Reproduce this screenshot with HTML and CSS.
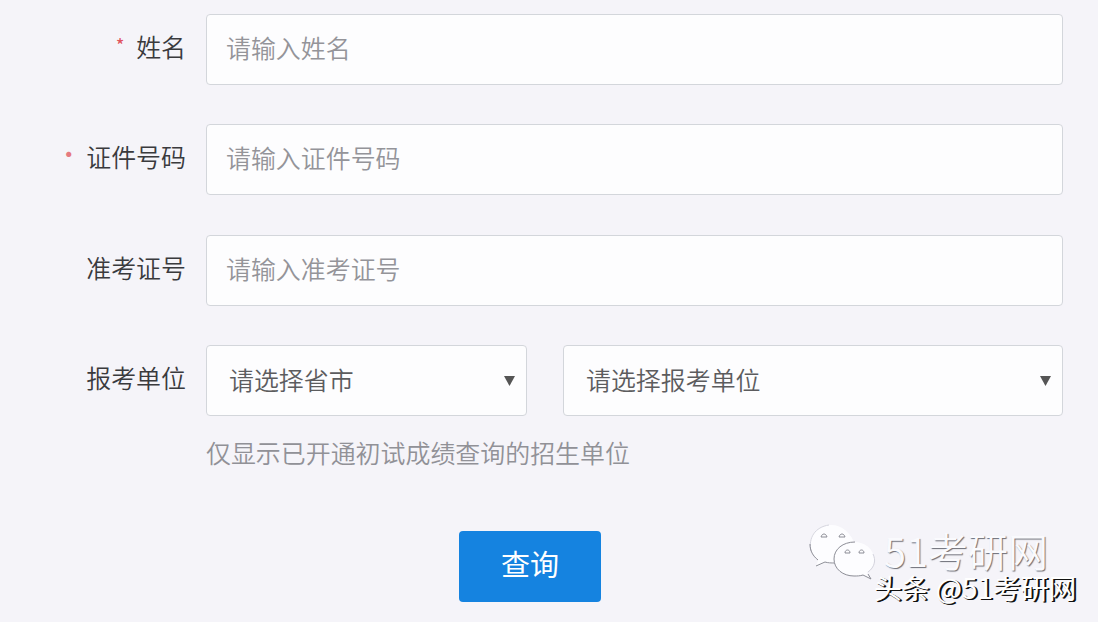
FILE: index.html
```html
<!DOCTYPE html>
<html lang="zh-CN">
<head>
    <meta charset="UTF-8">
    <meta name="viewport" content="width=device-width, initial-scale=1.0">
    <title>成绩查询</title>
    <link rel="stylesheet" href="styles.css">
</head>
<body>
    <form class="query-form">
        <div class="row">
            <label for="name"><span class="required tick">*</span>姓名</label>
            <input type="text" id="name" name="name" placeholder="请输入姓名">
        </div>
        <div class="row">
            <label for="idcard"><span class="required">•</span>证件号码</label>
            <input type="text" id="idcard" name="idcard" placeholder="请输入证件号码">
        </div>
        <div class="row">
            <label for="ticket">准考证号</label>
            <input type="text" id="ticket" name="ticket" placeholder="请输入准考证号">
        </div>
        <div class="row">
            <label for="province">报考单位</label>
            <div class="selects">
                <div class="select province">
                    <select id="province" name="province">
                        <option>请选择省市</option>
                    </select>
                    <svg class="arrow" viewBox="0 0 11 10"><path d="M0 0h11L5.5 10z"/></svg>
                </div>
                <div class="select school">
                    <select id="school" name="school">
                        <option>请选择报考单位</option>
                    </select>
                    <svg class="arrow" viewBox="0 0 11 10"><path d="M0 0h11L5.5 10z"/></svg>
                </div>
            </div>
        </div>
        <p class="hint">仅显示已开通初试成绩查询的招生单位</p>
        <button type="submit">查询</button>
    </form>

    <!-- Watermark -->
    <div class="wechat">
        <svg class="wechat-logo" viewBox="0 0 68 58">
            <path class="bubble" d="M22 3C10 3 1 11 1 22c0 7 3 12 8 16l-2 7 9-4c3 1 6 1 10 1l20-18C43 11 33 3 22 3z"/>
            <path class="shade light" d="M2 29C-1 16 6 5 20 3"/>
            <path class="shade" d="M1 22c0 7 3 12 8 16M7 44l9-4c3 1 6 1 10 1"/>
            <path class="bubble" d="M45 20c-11 0-20 7-20 17s9 17 20 17c3 0 6 0 9-1l6 3-2-6c5-3 7-8 7-13 0-10-9-17-20-17z"/>
            <path class="shade" d="M46 20c-12 0-21 7-21 17s9 17 20 17c3 0 6 0 9-1l8 4-3-5"/>
            <path class="shade light" d="M59 50c7-5 8-12 5-18"/>
            <path class="eye" d="M12 15c1-4 5-4 6 0zM30 15c1-4 5-4 6 0zM36 31c0-4 5-4 5 0zM50 31c0-4 5-4 5 0z"/>
        </svg>
        <span>51考研网</span>
    </div>
    <div class="author">头条 @51考研网</div>
</body>
</html>
```
FILE: styles.css
```css
* {
    box-sizing: border-box;
}

body {
    font-family: "Noto Sans CJK SC", sans-serif;
    font-size: 24.95px;
    font-weight: 350;
    background-color: #f5f4f9;
    color: #3a3a3d;
    margin: 0;
    height: 622px;
    overflow: hidden;
}

.query-form {
    padding: 14px 35px 0 0;
}

.row {
    display: flex;
    height: 71px;
    margin-bottom: 39.4px;
}

label {
    width: 206px;
    padding-right: 20px;
    line-height: 64px;
    text-align: right;
    white-space: nowrap;
}

.required {
    display: inline-block;
    margin-right: 5px;
    color: #e57a80;
    font-size: 25px;
    line-height: 20px;
    vertical-align: 3px;
}

.tick {
    margin-right: 12px;
    color: #e0555e;
    font-size: 17px;
    font-weight: 500;
    vertical-align: 5px;
}

input, select, button {
    font: inherit;
    border: 1px solid #d3d6db;
    border-radius: 4px;
    background-color: #fdfdfe;
}

input {
    flex: 1;
    min-width: 0;
    padding: 0 19px 5px;
}

input::placeholder {
    color: #949499;
}

.selects {
    display: flex;
    flex: 1;
    gap: 36px;
}

.select {
    display: grid;
    align-items: center;
}

.select > * {
    grid-area: 1 / 1;
}

.province {
    width: 321px;
}

.school {
    flex: 1;
}

select {
    width: 100%;
    height: 71px;
    padding: 0 22px 3px;
    color: #5c5c5e;
    appearance: none;
}

.arrow {
    width: 11px;
    height: 10px;
    margin-right: 12px;
    justify-self: end;
    fill: #555;
}

.hint {
    margin: -22px 0 0 206px;
    line-height: 36px;
    color: #919197;
}

button {
    display: block;
    width: 142px;
    height: 71px;
    margin: 61px 0 0 459px;
    padding: 0 0 6px;
    border: none;
    background-color: #1583e0;
    color: #fff;
    font-size: 29px;
    font-weight: 400;
}

/* Watermark over the page corner */
.wechat {
    position: absolute;
    left: 809px;
    top: 522px;
    display: flex;
    align-items: flex-start;
    gap: 7px;
    color: #fafafd;
    font-size: 40px;
    line-height: 36px;
    text-shadow: 1px 1px 1px #6c6d76;
}

.wechat span {
    padding-top: 10px;
}

.wechat-logo {
    width: 68px;
    height: 58px;
}

.bubble {
    fill: #fdfdff;
}

.shade, .eye {
    fill: none;
    stroke: #8c8d96;
    stroke-width: 1;
}

.light {
    stroke: #d5d5de;
}

.author {
    position: absolute;
    left: 874px;
    top: 573px;
    color: #fff;
    font-size: 27.8px;
    font-weight: 400;
    line-height: 28px;
    white-space: nowrap;
    text-shadow: 1px 1px 0 #111, 2px 1px 0 #111;
}
```
